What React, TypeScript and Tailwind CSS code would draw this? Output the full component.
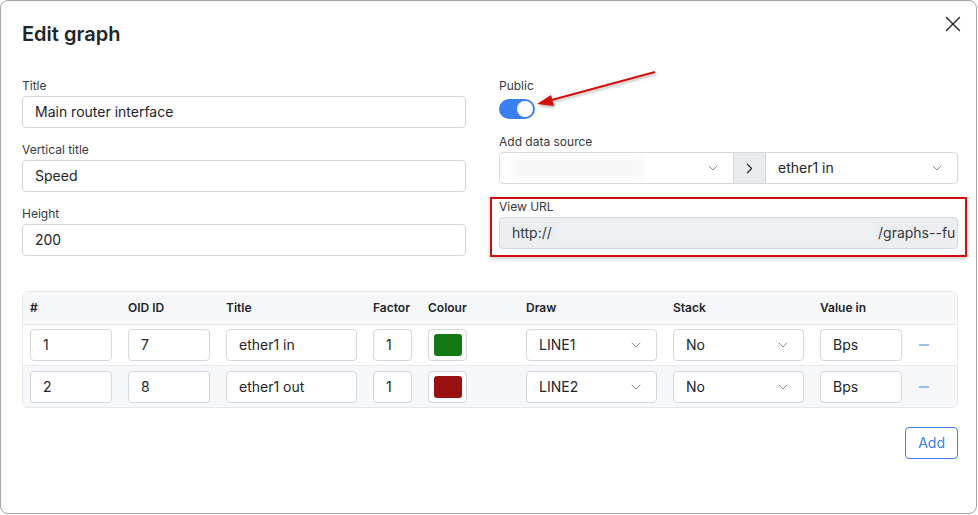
import { ChevronDown, ChevronRight, X } from 'lucide-react';

const font = { fontFamily: 'Inter, "Noto Sans", sans-serif' };

function Label({ children }: { children: React.ReactNode }) {
  return <div className="text-xs leading-4 text-[#343a40] mb-[2px]">{children}</div>;
}

function TextBox({ value, className = '' }: { value: string; className?: string }) {
  return (
    <div
      className={`h-8 flex items-center px-3 border border-[#d3d7df] rounded bg-white text-sm text-[#212529] ${className}`}
    >
      {value}
    </div>
  );
}

function SelectBox({ value, className = '' }: { value: string; className?: string }) {
  return (
    <div
      className={`h-8 flex items-center justify-between pl-3 pr-3 border border-[#d3d7df] rounded bg-white text-sm text-[#212529] ${className}`}
    >
      <span>{value}</span>
      <ChevronDown size={16} strokeWidth={1.25} className="text-[#6b7280]" />
    </div>
  );
}

interface Row {
  n: string;
  oid: string;
  title: string;
  factor: string;
  colour: string;
  draw: string;
  stack: string;
  unit: string;
}

const rows: Row[] = [
  { n: '1', oid: '7', title: 'ether1 in', factor: '1', colour: 'bg-[#137a13]', draw: 'LINE1', stack: 'No', unit: 'Bps' },
  { n: '2', oid: '8', title: 'ether1 out', factor: '1', colour: 'bg-[#9b1010]', draw: 'LINE2', stack: 'No', unit: 'Bps' },
];

const cols = 'grid grid-cols-[97px_98px_147px_55px_98px_147px_147px_98px_47px]';

export default function App() {
  return (
    <div className="w-[978px] h-[515px] bg-white relative" style={font}>
      <div className="w-[977px] h-[514px] border border-[#a3a3a3] rounded-lg bg-white pl-[21px] pr-[18px]">
        <div className="flex items-start justify-between h-[47px]">
          <h1 className="mt-[19px] text-xl leading-7 font-semibold text-[#212529]">Edit graph</h1>
          <X size={26} strokeWidth={1.3} className="text-[#212529] mt-[10px] -mr-[8px]" />
        </div>

        <div className="flex gap-[33px] mt-[30px]">
          <div className="w-[444px] flex flex-col gap-[14px]">
            <div>
              <Label>Title</Label>
              <TextBox value="Main router interface" />
            </div>
            <div>
              <Label>Vertical title</Label>
              <TextBox value="Speed" />
            </div>
            <div>
              <Label>Height</Label>
              <TextBox value="200" />
            </div>
          </div>

          <div className="w-[459px] flex flex-col">
            <div>
              <Label>Public</Label>
              <div className="mt-[5px] w-9 h-5 rounded-full bg-[#3b7ff2] flex items-center justify-end pr-[2px]">
                <div className="w-4 h-4 rounded-full bg-white" />
              </div>
            </div>
            <div className="mt-[15px]">
              <Label>Add data source</Label>
              <div className="flex h-8">
                <div className="w-[235px] flex items-center justify-between pl-3 pr-3 border border-[#d3d7df] rounded-l bg-white">
                  <div className="w-[130px] h-5 bg-[#f7f7f8] blur-[3px]" />
                  <ChevronDown size={16} strokeWidth={1.25} className="text-[#6b7280]" />
                </div>
                <div className="w-[31px] flex items-center justify-center bg-[#e9ecef] border-y border-[#d3d7df]">
                  <ChevronRight size={17} strokeWidth={1.5} className="text-[#212529]" />
                </div>
                <div className="flex-1 flex items-center justify-between pl-3 pr-3 border border-[#d3d7df] rounded-r bg-white text-sm text-[#212529]">
                  <span>ether1 in</span>
                  <ChevronDown size={16} strokeWidth={1.25} className="text-[#6b7280]" />
                </div>
              </div>
            </div>
            <div className="mt-[15px]">
              <Label>View URL</Label>
              <div className="h-8 flex items-center border border-[#d3d7df] rounded bg-[#eceef1] text-sm text-[#343a40] overflow-hidden pl-3">
                <span className="shrink-0">http://</span>
                <div className="flex-1 h-5 mx-1 bg-[#eef0f2] blur-[3px]" />
                <div className="w-[79px] shrink-0 overflow-hidden">
                  <span className="whitespace-nowrap">/graphs--fu</span>
                </div>
              </div>
            </div>
          </div>
        </div>

        <div className="mt-[35px] border border-[#e6e8ec] rounded-md overflow-hidden">
          <div className={`${cols} h-[33px] items-center bg-[#f6f7f9] border-b border-[#e6e8ec] text-xs font-semibold text-[#212529]`}>
            {['#', 'OID ID', 'Title', 'Factor', 'Colour', 'Draw', 'Stack', 'Value in', ''].map((h, i) => (
              <div key={i} className={i === 0 ? 'pl-[7px] pr-2' : 'px-2'}>
                {h}
              </div>
            ))}
          </div>
          {rows.map((r, i) => (
            <div
              key={r.n}
              className={`${cols} h-[41px] items-center ${i === 1 ? 'bg-[#f6f7f9]' : 'bg-white border-b border-[#e6e8ec]'}`}
            >
              <div className="pl-[7px] pr-2"><TextBox value={r.n} /></div>
              <div className="px-2"><TextBox value={r.oid} /></div>
              <div className="px-2"><TextBox value={r.title} /></div>
              <div className="px-2"><TextBox value={r.factor} /></div>
              <div className="px-2">
                <div className="w-[39px] h-8 border border-[#d3d7df] rounded bg-white flex items-center justify-center">
                  <div className={`w-[28px] h-[22px] rounded-[3px] ${r.colour}`} />
                </div>
              </div>
              <div className="px-2"><SelectBox value={r.draw} /></div>
              <div className="px-2"><SelectBox value={r.stack} /></div>
              <div className="px-2"><TextBox value={r.unit} /></div>
              <div className="pl-[9px]">
                <div className="w-[10px] h-[2px] bg-[#9bbcf5]" />
              </div>
            </div>
          ))}
        </div>

        <div className="flex justify-end mt-[19px]">
          <button className="h-8 px-3 border border-[#3b7ff2] rounded text-sm text-[#3b7ff2] bg-white">Add</button>
        </div>
      </div>

      {/* annotations */}
      <div className="absolute left-[490px] top-[197px] w-[477px] h-[60px] border-2 border-[#d40c0c] shadow-[0_2px_4px_rgba(0,0,0,0.2)]" />
      <svg className="absolute left-0 top-0 pointer-events-none" width={978} height={515}>
        <defs>
          <filter id="sh" x="-10%" y="-10%" width="120%" height="140%">
            <feDropShadow dx="1" dy="2" stdDeviation="1.2" floodColor="#000" floodOpacity="0.25" />
          </filter>
        </defs>
        <g filter="url(#sh)">
          <line x1={655} y1={72} x2={548} y2={101} stroke="#d40c0c" strokeWidth={2} />
          <polygon points="537,104 551,95 554,106" fill="#d40c0c" />
        </g>
      </svg>
    </div>
  );
}
